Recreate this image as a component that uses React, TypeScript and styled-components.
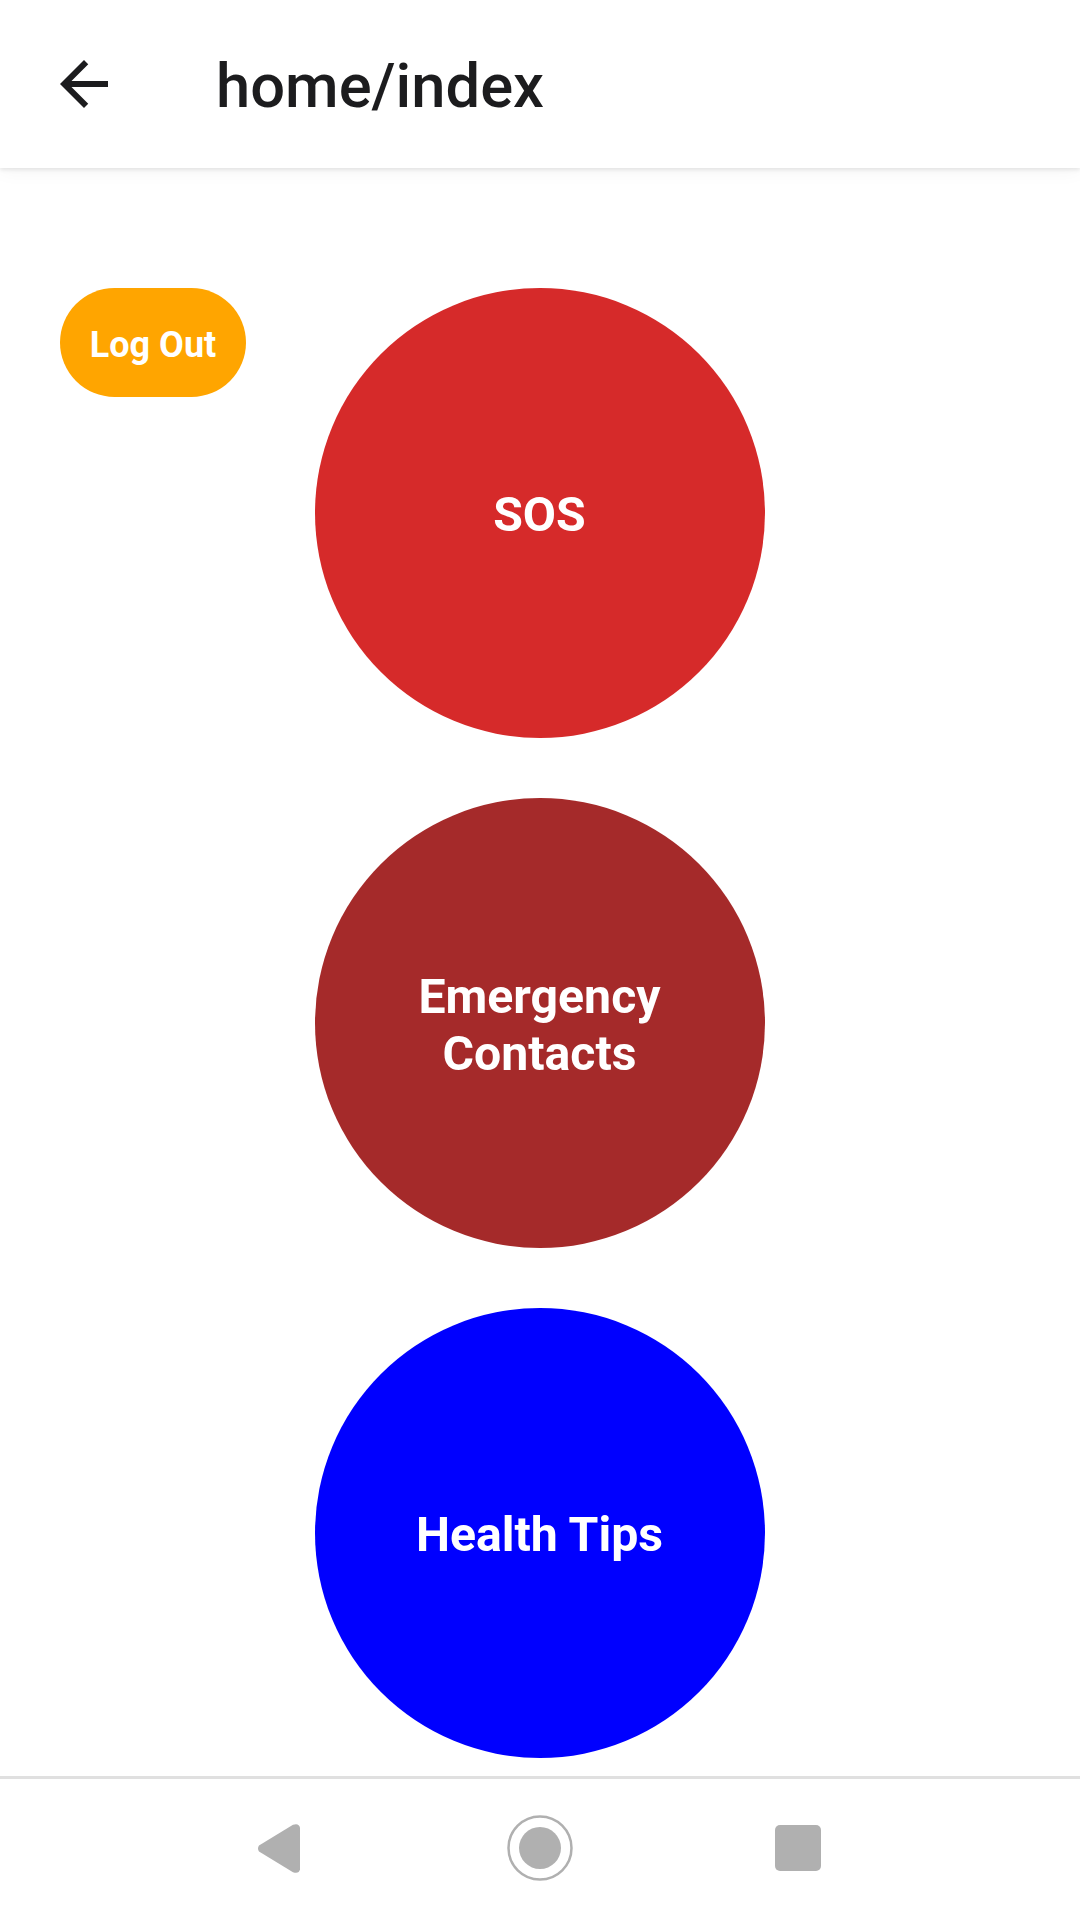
import React from 'react'
import styled, { createGlobalStyle } from 'styled-components'

const GlobalStyle = createGlobalStyle`
  html, body {
    margin: 0;
    padding: 0;
    background: #fff;
    font-family: Roboto, "Liberation Sans", sans-serif;
  }
`

const Screen = styled.div`
  width: 1080px;
  height: 1920px;
  display: flex;
  flex-direction: column;
  background: #fff;
  overflow: hidden;
`

const Header = styled.header`
  flex: 0 0 168px;
  display: flex;
  align-items: center;
  padding-left: 60px;
  background: #fff;
  box-shadow: 0 2px 4px rgba(0, 0, 0, 0.09), 0 4px 18px rgba(0, 0, 0, 0.04);
  z-index: 1;
`

const BackButton = styled.button`
  width: 48px;
  height: 48px;
  padding: 0;
  border: 0;
  background: none;
  display: flex;
`

const Title = styled.h1`
  margin: 4px 0 0 108px;
  font-size: 61.5px;
  font-weight: 500;
  line-height: 72px;
  color: #1c1c1e;
`

const Content = styled.main`
  flex: 1;
  display: grid;
  grid-template-columns: 1fr 450px 1fr;
  align-items: start;
  padding-top: 120px;
`

const LogoutButton = styled.button`
  justify-self: start;
  width: 186px;
  height: 109px;
  margin-left: 60px;
  padding: 5px 0 0;
  border: 0;
  border-radius: 55px;
  background: #ffa500;
  color: #fff;
  font-family: inherit;
  font-size: 36px;
  font-weight: 700;
`

const Circles = styled.div`
  display: flex;
  flex-direction: column;
  gap: 60px;
`

const Circle = styled.button<{ $color: string }>`
  width: 450px;
  height: 450px;
  padding: 3px 60px 0 59px;
  border: 0;
  border-radius: 50%;
  background: ${({ $color }) => $color};
  color: #fff;
  font-family: inherit;
  font-size: 48.2px;
  font-weight: 700;
  line-height: 57px;
  text-align: center;
`

const NavBar = styled.nav`
  flex: 0 0 144px;
  box-sizing: border-box;
  border-top: 3px solid #e0e0e0;
  padding-bottom: 3px;
  display: grid;
  grid-template-columns: 258px 42px 207px 66px 202px 46px 259px;
  align-items: center;
  background: #fff;
`

const NavIcon = styled.svg<{ $col: number }>`
  grid-column: ${({ $col }) => $col};
  display: block;
  fill: #b0b0b0;
`

export default function App() {
  return (
    <Screen>
      <GlobalStyle />
      <Header>
        <BackButton aria-label="back">
          <svg width="48" height="48" viewBox="4 4 16 16" fill="#1c1c1e">
            <path d="M20 11H7.83l5.59-5.59L12 4l-8 8 8 8 1.41-1.41L7.83 13H20v-2z" />
          </svg>
        </BackButton>
        <Title>home/index</Title>
      </Header>
      <Content>
        <LogoutButton>Log Out</LogoutButton>
        <Circles>
          <Circle $color="#d62a2a">SOS</Circle>
          <Circle $color="#a52a2a">Emergency Contacts</Circle>
          <Circle $color="#0000ff">Health Tips</Circle>
        </Circles>
      </Content>
      <NavBar>
        <NavIcon $col={2} width="42" height="49" viewBox="0 0 42 49">
          <path d="M1 21.5 35 .8q6-2 7 3v41.400q-1 5-7 3L1 27.500q-2-3 0-6Z" />
        </NavIcon>
        <NavIcon $col={4} width="66" height="66" viewBox="0 0 66 66">
          <circle cx="33" cy="33" r="31.500" fill="none" stroke="#b0b0b0" strokeWidth="2.500" />
          <circle cx="33" cy="33" r="21" />
        </NavIcon>
        <NavIcon $col={6} width="46" height="46" viewBox="0 0 46 46">
          <rect width="46" height="46" rx="5" />
        </NavIcon>
      </NavBar>
    </Screen>
  )
}
